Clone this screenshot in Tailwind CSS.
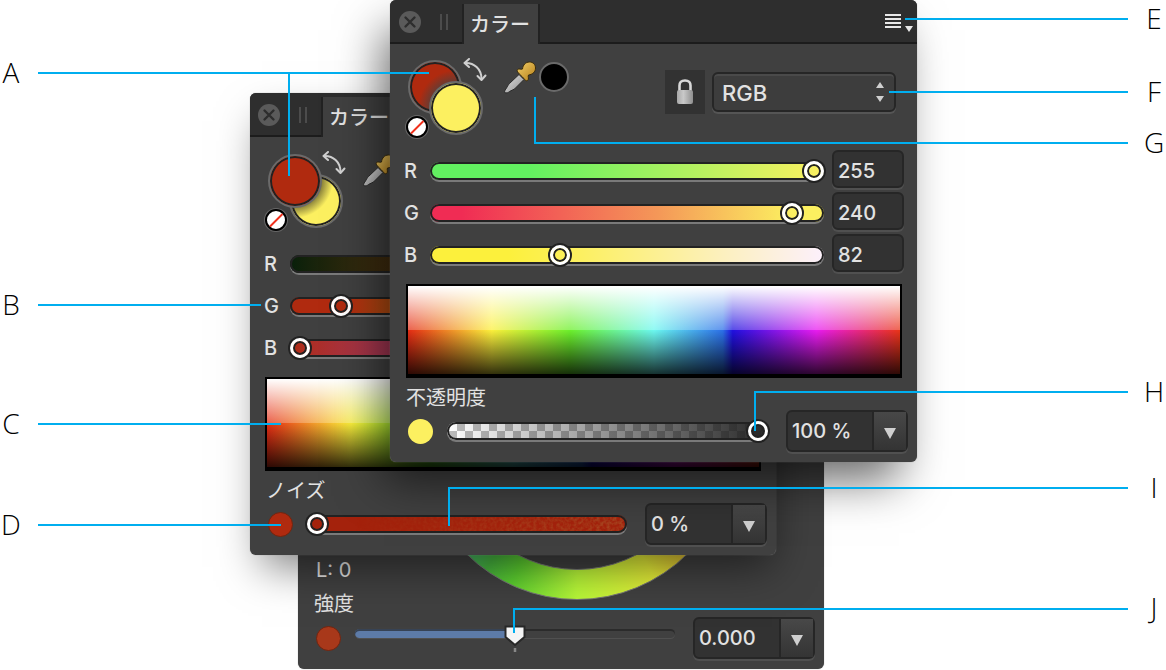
<!DOCTYPE html>
<html lang="ja">
<head>
<meta charset="utf-8">
<meta name="viewport" content="width=device-width, initial-scale=1">
<title>カラーパネル</title>
<script src="https://cdn.jsdelivr.net/npm/@tailwindcss/browser@4"></script>
</head>
<body class="bg-white">
<svg class="absolute size-0" aria-hidden="true">
  <defs>
    <linearGradient id="gold" x1="0" y1="0" x2="1" y2="1"><stop offset="0" stop-color="#f3cf6a"/><stop offset="1" stop-color="#b57f18"/></linearGradient>
    <linearGradient id="glass" x1="0" y1="0" x2="1" y2="1"><stop offset="0" stop-color="#e4e4e4"/><stop offset="1" stop-color="#8c8c8c"/></linearGradient>
    <linearGradient id="steel" x1="0" y1="0" x2="1" y2="0"><stop offset="0" stop-color="#a8a8a8"/><stop offset=".4" stop-color="#c9c9c9"/><stop offset="1" stop-color="#8f8f8f"/></linearGradient>
  </defs>
  <symbol id="close" viewBox="0 0 22 22"><circle cx="11" cy="11" r="11" fill="#5a5a5a"/><path d="M6.5 6.5l9 9M15.500 6.500l-9 9" stroke="#2d2d2d" stroke-width="2.400" stroke-linecap="round"/></symbol>
  <symbol id="swap" viewBox="0 0 24 24"><g fill="none" stroke="#d0d0d0" stroke-width="2" stroke-linecap="round" stroke-linejoin="round"><path d="M2 5C11 4.500 18.500 11 18.500 21"/><path d="M6 1L1.500 5l4.500 4"/><path d="M14.500 18l4 4 4-4.500"/></g></symbol>
  <symbol id="none" viewBox="0 0 24 24"><circle cx="12" cy="12" r="12" fill="#666"/><circle cx="12" cy="12" r="10" fill="#fff" stroke="#000" stroke-width="2"/><path d="M6 18.500L18.500 6" stroke="#f0301c" stroke-width="2"/></symbol>
  <symbol id="dropper" viewBox="0 0 34 34"><path d="M1.500 31.500c0-2 1-3 2-4.500 1-1.500 1.500-3 3-4.500l9.500-9 5 5-9.500 9.500c-1.500 1-3.500 1.500-5 2.500-1 1-3 2-5 1z" fill="url(#glass)" stroke="#2b2b2b" stroke-width="1"/><path d="M14.500 8.500c2-1.500 3.500.5 5-.5.5-4 3-7 7-7 3.500 0 6 2.500 6 6 0 4-3 6.500-7 7-1 1.500 1 4-1 5.500-2 1-3-1.500-5-3.500-2.500-2.500-6.500-5.500-5-7.500z" fill="url(#gold)" stroke="#3a2c0c" stroke-width="1"/></symbol>
  <symbol id="lock" viewBox="0 0 18 26"><path d="M3.500 12V6.500c0-3 1.500-5 5.500-5s5.500 2 5.500 5V12" fill="none" stroke="#d8d8d8" stroke-width="2.600"/><rect x="1" y="11" width="16" height="14" rx="2" fill="url(#steel)"/></symbol>
  <symbol id="down" viewBox="0 0 12 11"><path d="M0 0h12L6 11z" fill="#cfcfcf"/></symbol>
</svg>

<main class="relative min-h-screen overflow-hidden font-['Inter','Noto_Sans_CJK_JP',sans-serif] text-[20px] leading-5 text-[#e2e2e2] [&_.rail]:h-[18px] [&_.rail]:appearance-none [&_.rail]:rounded-full [&_.rail]:shadow-[inset_0_0_0_2px_#222,0_2px_0_#7a7a7a] [&_.rail::-webkit-slider-thumb]:size-5 [&_.rail::-webkit-slider-thumb]:appearance-none [&_.rail::-webkit-slider-thumb]:rounded-full [&_.rail::-webkit-slider-thumb]:border-3 [&_.rail::-webkit-slider-thumb]:border-white [&_.rail::-webkit-slider-thumb]:shadow-[0_0_0_2px_#222,inset_0_0_0_2px_#222] [&_.well]:rounded-md [&_.well]:border-2 [&_.well]:border-[#262626] [&_.well]:bg-[#323232] [&_.well]:font-medium [&_.well]:shadow-[0_2px_0_#505050] [&_.spectrum]:h-[94px] [&_.spectrum]:border-2 [&_.spectrum]:border-b-4 [&_.spectrum]:border-black [&_.spectrum]:bg-[linear-gradient(to_bottom,#fff,rgba(255,255,255,.25)_50%,transparent_50%,rgba(0,0,0,.8)),linear-gradient(to_right,#e42c14,#fcf03c_17%,#6cf02c_33%,#6cf8f0_50%,#2c70e8_64%,#2010e0_66%,#e81cf0_83%,#ea3418)]">

  <!-- Wheel panel -->
  <section aria-label="カラーホイール" class="absolute left-[298px] top-[207px] w-[526px] rounded-md bg-[#404040] shadow-[0_0_1px_#888]">
    <div class="flex h-[393px] items-end pl-[18px]">
      <p class="w-[104px] pb-5">L: 0</p>
      <div class="flex size-[314px] items-center justify-center rounded-full border border-[#777] bg-[conic-gradient(#a040e0,#e03050_60deg,#e0a030_125deg,#e6ee38_150deg,#b8f838_180deg,#5cd030_205deg,#48b840_216deg,#48b880_230deg,#40c0c0_270deg,#4060e0_320deg,#a040e0)]" role="img" aria-label="色相環"><div class="size-[254px] rounded-full border border-[#777] bg-[#404040]"></div></div>
    </div>
    <label for="strength" class="-mt-[6px] mb-[3px] block pl-4">強度</label>
    <div class="flex items-center pb-[10px] pl-[18px] pr-[9px]">
      <span class="size-[25px] rounded-full border border-[#702510] bg-[#a8381a]"></span>
      <div class="relative ml-[14px] mr-[18px] flex flex-1 items-center">
        <input id="strength" type="range" min="0" max="1" step="0.001" value="0.5" class="m-0 mb-[10px] h-[9px] w-full appearance-none rounded-full bg-[linear-gradient(to_right,#5d7ba8_50%,transparent_50%)] shadow-[inset_0_2px_0_rgba(30,30,30,.6),0_1px_0_#505050] [&::-webkit-slider-thumb]:size-5 [&::-webkit-slider-thumb]:appearance-none [&::-webkit-slider-thumb]:opacity-0">
        <svg class="pointer-events-none absolute left-1/2 top-0 -mt-1 h-7 w-[22px] -translate-x-1/2" viewBox="0 0 22 28" aria-hidden="true"><path d="M1.500 1.500h19V12L11 20 1.500 12z" fill="#f4f4f4" stroke="#282828" stroke-width="2"/><path d="M11 23v4" stroke="#888" stroke-width="2.500"/></svg>
      </div>
      <div class="well flex h-[42px] w-[122px]">
        <input type="text" value="0.000" aria-label="強度の値" class="w-[84px] bg-transparent pl-1 outline-none">
        <button type="button" aria-label="強度の一覧" class="flex flex-1 items-center justify-center border-l-2 border-[#262626] bg-linear-to-b from-[#484848] to-[#343434]"><svg class="mt-1 h-[11px] w-3"><use href="#down"/></svg></button>
      </div>
    </div>
  </section>

  <!-- Middle panel -->
  <section aria-label="カラー(ノイズ)" class="absolute left-[250px] top-[93px] w-[526px] rounded-md bg-[#404040] shadow-[0_0_1px_#888,4px_20px_40px_-8px_rgba(0,0,0,.5)]">
    <header class="flex h-11 items-end rounded-t-md border-b-2 border-[#1c1c1c] bg-[#2e2e2e] pl-2">
      <button type="button" aria-label="閉じる" class="mb-[9px]"><svg class="size-[22px]"><use href="#close"/></svg></button>
      <span class="mb-3 ml-[19px] h-4 w-2 border-x-2 border-[#4c4c4c]"></span>
      <h2 class="-mb-[2px] ml-[14px] h-10 w-[76px] border-l-2 border-[#222] bg-[#404040] pl-[6px] pt-[11px] font-medium">カラー</h2>
    </header>
    <div class="flex h-[106px] items-start pl-[14px] pt-[14px]">
      <div class="relative h-20 w-[84px]">
        <button type="button" aria-label="塗りの色" class="absolute left-[25px] top-[23px] size-[54px] rounded-full border-2 border-[#6a6a6a] bg-[radial-gradient(circle_at_4px_4px,#6b6430_24px,#fcf060_38px)] shadow-[inset_0_0_0_2px_#222]"></button>
        <button type="button" aria-label="線の色" class="absolute left-1 top-[3px] size-[54px] rounded-full border-2 border-[#6a6a6a] bg-[#b02a0f] shadow-[inset_0_0_0_2px_#222]"></button>
        <button type="button" aria-label="なし" class="absolute left-0 top-[57px] size-6"><svg class="size-6"><use href="#none"/></svg></button>
        <button type="button" aria-label="入れ替え" class="absolute left-[58px] top-0 size-6"><svg class="size-6"><use href="#swap"/></svg></button>
      </div>
      <button type="button" aria-label="スポイト" class="ml-[14px] mt-[3px]"><svg class="size-[34px]"><use href="#dropper"/></svg></button>
    </div>
    <div class="grid gap-1 pl-[14px] pr-[12px] font-medium">
      <div class="flex h-[38px] items-center"><label for="r2" class="mt-1 w-[26px]">R</label><input id="r2" type="range" max="255" value="178" class="rail mr-2 mt-1 min-w-0 flex-1 bg-linear-to-r from-[#07200a] to-[#e02a10]"><input aria-label="R" type="text" value="178" class="well h-[38px] w-[72px] pl-1 pt-1"></div>
      <div class="flex h-[38px] items-center"><label for="g2" class="mt-1 w-[26px]">G</label><input id="g2" type="range" max="255" value="28" class="rail mr-2 mt-1 min-w-0 flex-1 bg-linear-to-r from-[#b02a0f] from-15% to-[#70ff20]"><input aria-label="G" type="text" value="28" class="well h-[38px] w-[72px] pl-1 pt-1"></div>
      <div class="flex h-[38px] items-center"><label for="b2" class="mt-1 w-[26px]">B</label><input id="b2" type="range" max="255" value="0" class="rail mr-2 mt-1 min-w-0 flex-1 bg-linear-to-r from-[#b02a0f] to-[#8020d0]"><input aria-label="B" type="text" value="0" class="well h-[38px] w-[72px] pl-1 pt-1"></div>
    </div>
    <div class="spectrum mx-[15px] mt-3" role="img" aria-label="カラースペクトル"></div>
    <label for="noise" class="mt-[10px] block pl-4">ノイズ</label>
    <div class="mt-[2px] flex items-center pb-[10px] pl-[18px] pr-[9px]">
      <span class="size-[25px] rounded-full border border-[#702510] bg-[#b02a0f]"></span>
      <div class="relative ml-[14px] mr-[18px] flex flex-1 rounded-full bg-[#a4220c]">
        <svg class="absolute inset-0 h-full w-full rounded-full [mask-image:linear-gradient(to_right,transparent_15%,black)]" aria-hidden="true"><filter id="grain"><feTurbulence type="fractalNoise" baseFrequency=".3" numOctaves="2" seed="4"/><feColorMatrix values="0 0 0 0 .4  0 0 0 0 .08  0 0 0 0 .02  1.800 0 0 0 -.6"/></filter><rect width="100%" height="100%" filter="url(#grain)"/></svg>
        <input id="noise" type="range" max="100" value="0" class="rail relative w-full bg-transparent">
      </div>
      <div class="well flex h-[42px] w-[122px]">
        <input type="text" value="0 %" aria-label="ノイズの値" class="w-[84px] bg-transparent pl-1 outline-none">
        <button type="button" aria-label="ノイズの一覧" class="flex flex-1 items-center justify-center border-l-2 border-[#262626] bg-linear-to-b from-[#484848] to-[#343434]"><svg class="mt-1 h-[11px] w-3"><use href="#down"/></svg></button>
      </div>
    </div>
  </section>

  <!-- Front panel -->
  <section aria-label="カラー(不透明度)" class="absolute left-[390px] top-0 w-[527px] rounded-md bg-[#404040] shadow-[0_0_1px_#888,-12px_24px_44px_-6px_rgba(0,0,0,.6)]">
    <header class="flex h-11 items-end rounded-t-md border-b-2 border-[#1c1c1c] bg-[#2e2e2e] pl-[9px]">
      <button type="button" aria-label="閉じる" class="mb-[9px]"><svg class="size-[22px]"><use href="#close"/></svg></button>
      <span class="mb-3 ml-[19px] h-4 w-2 border-x-2 border-[#4c4c4c]"></span>
      <h2 class="-mb-[2px] ml-[14px] h-10 w-[78px] border-x-2 border-[#222] bg-[#404040] pl-[6px] pt-[11px] font-medium">カラー</h2>
      <button type="button" aria-label="パネルメニュー" class="mb-[9px] ml-auto mr-1"><svg class="h-5 w-7" viewBox="0 0 28 20"><path d="M0 2h16M0 6h16M0 10h16M0 14h16" stroke="#e8e8e8" stroke-width="2"/><path d="M20 13h8l-4 6z" fill="#e8e8e8"/></svg></button>
    </header>
    <div class="flex h-[106px] items-start pl-[15px] pr-[21px] pt-[14px]">
      <div class="relative h-20 w-[84px]">
        <button type="button" aria-label="線の色" class="absolute left-[3px] top-[2px] size-[54px] rounded-full border-2 border-[#6a6a6a] bg-[radial-gradient(circle_at_46px_46px,#5c3e38_24px,#b02a0f_38px)] shadow-[inset_0_0_0_2px_#222]"></button>
        <button type="button" aria-label="塗りの色" class="absolute left-6 top-[23px] size-[54px] rounded-full border-2 border-[#6a6a6a] bg-[#fcf060] shadow-[inset_0_0_0_2px_#222]"></button>
        <button type="button" aria-label="なし" class="absolute left-0 top-[57px] size-6"><svg class="size-6"><use href="#none"/></svg></button>
        <button type="button" aria-label="入れ替え" class="absolute left-[58px] top-0 size-6"><svg class="size-6"><use href="#swap"/></svg></button>
      </div>
      <button type="button" aria-label="スポイト" class="ml-[14px] mt-[3px]"><svg class="size-[34px]"><use href="#dropper"/></svg></button>
      <button type="button" aria-label="取得した色" class="ml-[2px] mt-1 size-[30px] rounded-full border-2 border-[#6a6a6a] bg-black"></button>
      <button type="button" aria-label="ロック" class="ml-auto mt-3 flex h-11 w-10 items-center justify-center bg-[#323232]"><svg class="h-[26px] w-[18px]"><use href="#lock"/></svg></button>
      <div class="relative ml-[7px] mt-[14px] w-[184px]">
        <select aria-label="カラーモデル" class="h-10 w-full appearance-none rounded-md border-2 border-[#262626] bg-[#3d3d3d] pl-2 pt-[2px] text-[22px] font-medium shadow-[0_2px_0_#555,inset_0_2px_0_#4a4a4a]"><option>RGB</option></select>
        <svg class="pointer-events-none absolute right-3 top-[10px] h-5 w-2" viewBox="0 0 8 20" aria-hidden="true"><path d="M0 6h8L4 0zM0 14h8l-4 6z" fill="#cfcfcf"/></svg>
      </div>
    </div>
    <div class="grid gap-1 pl-[14px] pr-[13px] font-medium">
      <div class="flex h-[38px] items-center"><label for="r1" class="mt-1 w-[26px]">R</label><input id="r1" type="range" max="255" value="255" class="rail mr-2 mt-1 min-w-0 flex-1 bg-[linear-gradient(to_right,#62f060_25%,#b0f060_65%,#fcf060)]"><input aria-label="R" type="text" value="255" class="well h-[38px] w-[72px] pl-1 pt-1"></div>
      <div class="flex h-[38px] items-center"><label for="g1" class="mt-1 w-[26px]">G</label><input id="g1" type="range" max="255" value="240" class="rail mr-2 mt-1 min-w-0 flex-1 bg-[linear-gradient(to_right,#f02c54_8%,#f49858_58%,#fcf060_92%)]"><input aria-label="G" type="text" value="240" class="well h-[38px] w-[72px] pl-1 pt-1"></div>
      <div class="flex h-[38px] items-center"><label for="b1" class="mt-1 w-[26px]">B</label><input id="b1" type="range" max="255" value="82" class="rail mr-2 mt-1 min-w-0 flex-1 bg-[linear-gradient(to_right,#fcf03c_20%,#fcf060_38%,#fcf0c0_75%,#fcf0fc)]"><input aria-label="B" type="text" value="82" class="well h-[38px] w-[72px] pl-1 pt-1"></div>
    </div>
    <div class="spectrum ml-4 mr-[15px] mt-3" role="img" aria-label="カラースペクトル"></div>
    <label for="opacity" class="mt-[10px] block pl-4">不透明度</label>
    <div class="mt-[2px] flex items-center pb-[10px] pl-[18px] pr-[9px]">
      <span class="size-[25px] rounded-full bg-[#fcf060]"></span>
      <input id="opacity" type="range" max="100" value="100" class="rail ml-[14px] mr-[18px] min-w-0 flex-1 bg-[linear-gradient(to_right,transparent,rgba(32,32,32,.97)),repeating-conic-gradient(#bbb_0_25%,#fff_0_50%)] bg-[length:100%_100%,16px_14px] bg-[position:0_0,2px_2px]">
      <div class="well flex h-[42px] w-[122px]">
        <input type="text" value="100 %" aria-label="不透明度の値" class="w-[84px] bg-transparent pl-1 outline-none">
        <button type="button" aria-label="不透明度の一覧" class="flex flex-1 items-center justify-center border-l-2 border-[#262626] bg-linear-to-b from-[#484848] to-[#343434]"><svg class="mt-1 h-[11px] w-3"><use href="#down"/></svg></button>
      </div>
    </div>
  </section>

  <!-- Callouts -->
  <svg class="pointer-events-none absolute left-0 top-0 h-[670px] w-[1166px]" viewBox="0 0 1166 670" fill="none" stroke="#00aeef" stroke-width="2" aria-hidden="true">
    <path d="M38 73H429M289 73V176M38 305H261M38 424H281M38 525H281M905 19H1128M889 92H1128M535 97V143H1128M755 431V392H1128M449 526V488H1128M514 633V609H1128"/>
  </svg>
  <div class="pointer-events-none text-center font-['Open_Sans',sans-serif] text-[28px] font-light leading-7 text-black">
    <span class="absolute left-0 top-[58px] w-[22px]">A</span>
    <span class="absolute left-0 top-[290px] w-[22px]">B</span>
    <span class="absolute left-0 top-[409px] w-[22px]">C</span>
    <span class="absolute left-0 top-[510px] w-[22px]">D</span>
    <span class="absolute left-[1142px] top-1 w-6">E</span>
    <span class="absolute left-[1142px] top-[77px] w-6">F</span>
    <span class="absolute left-[1142px] top-[128px] w-6">G</span>
    <span class="absolute left-[1142px] top-[377px] w-6">H</span>
    <span class="absolute left-[1142px] top-[473px] w-6">I</span>
    <span class="absolute left-[1142px] top-[593px] w-6">J</span>
  </div>
</main>
</body>
</html>
